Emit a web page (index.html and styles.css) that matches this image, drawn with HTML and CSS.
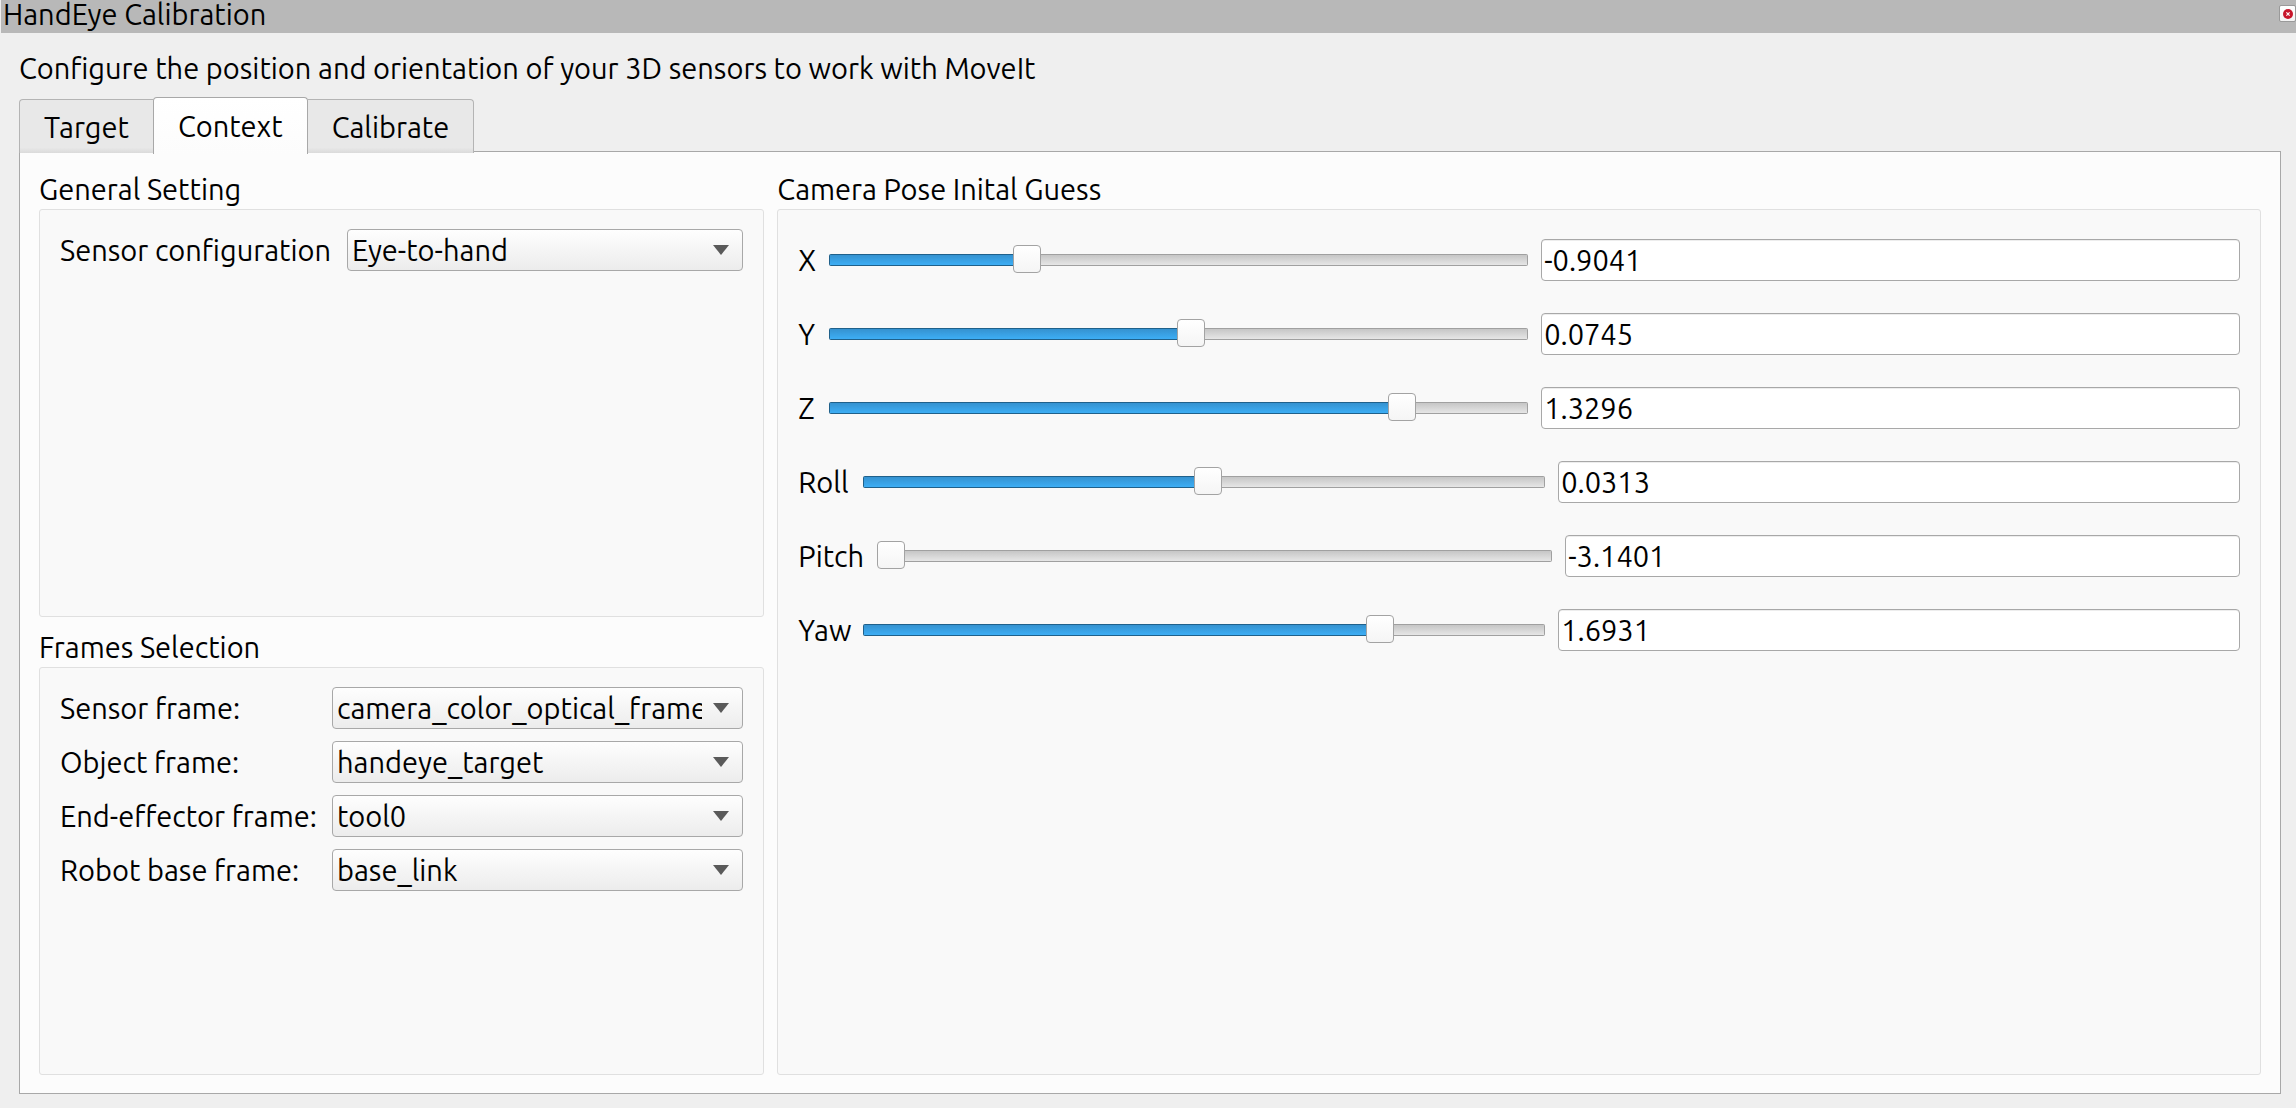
FILE: index.html
```
<!DOCTYPE html>
<html lang="en">
<head>
<meta charset="utf-8">
<title>HandEye Calibration</title>
<link rel="stylesheet" href="styles.css">
</head>
<body>
<header class="titlebar">
  <h1 class="titlebar-text">HandEye Calibration</h1>
  <button class="close" type="button" aria-label="Close">
    <svg viewBox="0 0 10 10" width="10" height="10" aria-hidden="true">
      <circle cx="5" cy="5" r="5" fill="#c7162b"/>
      <path d="M3.4 3.4l3.2 3.2M6.6 3.4L3.4 6.6" stroke="#fff" stroke-width="1.2"/>
    </svg>
  </button>
</header>
<main class="panel">
  <p class="intro">Configure the position and orientation of your 3D sensors to work with MoveIt</p>
  <div class="tabs" role="tablist">
    <button class="tab tab-first" type="button" role="tab" aria-selected="false">Target</button>
    <button class="tab tab-active" type="button" role="tab" aria-selected="true">Context</button>
    <button class="tab tab-last" type="button" role="tab" aria-selected="false">Calibrate</button>
  </div>
  <div class="pane" role="tabpanel">
    <div class="column">
      <section class="group">
        <h2 class="group-title">General Setting</h2>
        <div class="group-box">
          <div class="setting">
            <label for="sensor-config">Sensor configuration</label>
            <select class="combo" id="sensor-config"><option>Eye-to-hand</option><option>Eye-in-hand</option></select>
          </div>
        </div>
      </section>
      <section class="group">
        <h2 class="group-title">Frames Selection</h2>
        <div class="group-box">
          <div class="frames">
            <label for="sensor-frame">Sensor frame:</label>
            <select class="combo" id="sensor-frame"><option>camera_color_optical_frame</option></select>
            <label for="object-frame">Object frame:</label>
            <select class="combo" id="object-frame"><option>handeye_target</option></select>
            <label for="effector-frame">End-effector frame:</label>
            <select class="combo" id="effector-frame"><option>tool0</option></select>
            <label for="base-frame">Robot base frame:</label>
            <select class="combo" id="base-frame"><option>base_link</option></select>
          </div>
        </div>
      </section>
    </div>
    <section class="group">
      <h2 class="group-title">Camera Pose Inital Guess</h2>
      <div class="group-box pose">
        <div class="pose-row">
          <label class="name-axis" for="x">X</label>
          <input class="slider" type="range" min="-2" max="2" step="0.0001" value="-0.9041" style="--pos:0.2740" aria-label="X slider">
          <input class="field" id="x" type="text" value="-0.9041">
        </div>
        <div class="pose-row">
          <label class="name-axis" for="y">Y</label>
          <input class="slider" type="range" min="-2" max="2" step="0.0001" value="0.0745" style="--pos:0.5186" aria-label="Y slider">
          <input class="field" id="y" type="text" value="0.0745">
        </div>
        <div class="pose-row">
          <label class="name-axis" for="z">Z</label>
          <input class="slider" type="range" min="-2" max="2" step="0.0001" value="1.3296" style="--pos:0.8324" aria-label="Z slider">
          <input class="field" id="z" type="text" value="1.3296">
        </div>
        <div class="pose-row">
          <label class="name-angle" for="roll">Roll</label>
          <input class="slider" type="range" min="-3.1416" max="3.1416" step="0.0001" value="0.0313" style="--pos:0.5050" aria-label="Roll slider">
          <input class="field" id="roll" type="text" value="0.0313">
        </div>
        <div class="pose-row">
          <label class="name-pitch" for="pitch">Pitch</label>
          <input class="slider" type="range" min="-3.1416" max="3.1416" step="0.0001" value="-3.1401" style="--pos:0.0002" aria-label="Pitch slider">
          <input class="field" id="pitch" type="text" value="-3.1401">
        </div>
        <div class="pose-row">
          <label class="name-angle" for="yaw">Yaw</label>
          <input class="slider" type="range" min="-3.1416" max="3.1416" step="0.0001" value="1.6931" style="--pos:0.7695" aria-label="Yaw slider">
          <input class="field" id="yaw" type="text" value="1.6931">
        </div>
      </div>
    </section>
  </div>
</main>
</body>
</html>
```
FILE: styles.css
```
* {
  box-sizing: border-box;
}

body {
  margin: 0;
  min-height: 100vh;
  display: flex;
  flex-direction: column;
  background: #efefef;
  color: #000;
  font: 29px/34px Ubuntu, "Noto Sans", sans-serif;
}

button,
input,
select {
  margin: 0;
  font: inherit;
  color: inherit;
}

h1,
h2,
p {
  margin: 0;
  font: inherit;
}

/* Title bar */
.titlebar {
  display: flex;
  justify-content: space-between;
  height: 33px;
  margin-left: 1px;
  padding-left: 2px;
  background: #b8b8b8;
}

.titlebar-text {
  line-height: 28px;
}

.close {
  display: flex;
  align-items: center;
  justify-content: center;
  width: 17px;
  height: 17px;
  margin-top: 5px;
  padding: 0;
  border: 1px solid #9a9a9a;
  border-radius: 2px;
  background: linear-gradient(#fff, #f3f3f3);
}

/* Tabs */
.panel {
  flex: 1;
  display: flex;
  flex-direction: column;
  padding: 18px 15px 14px 19px;
}

.tabs {
  display: flex;
  align-items: flex-end;
  margin: 12px 0 -3px;
  position: relative;
}

.tab {
  height: 54px;
  margin-bottom: 1px;
  padding: 0 24px;
  border: 1px solid #b4b4b4;
  border-bottom: 0;
  border-radius: 4px 4px 0 0;
  background: linear-gradient(#e8e8e8 90%, #dadada);
  line-height: 52px;
}

.tab-first {
  border-right: 0;
  border-top-right-radius: 0;
}

.tab-last {
  border-left: 0;
  border-top-left-radius: 0;
}

.tab-active {
  height: 57px;
  margin-bottom: 0;
  border-color: #a8a8a8;
  background: linear-gradient(#fff, #fcfcfc);
}

.pane {
  flex: 1;
  display: grid;
  grid-template-columns: minmax(0, 22fr) minmax(0, 45fr);
  gap: 13px;
  padding: 20px 19px 18px;
  border: 1px solid #a8a8a8;
  background: #fcfcfc;
}

/* Groups */
.column {
  display: flex;
  flex-direction: column;
  gap: 13px;
}

.group {
  flex: 1;
  display: flex;
  flex-direction: column;
  gap: 3px;
}

.group-box {
  flex: 1;
  padding: 19px 20px;
  border: 1px solid #e0e0e0;
  border-radius: 3px;
  background: #f9f9f9;
}

.setting,
.frames {
  display: grid;
  align-items: center;
  gap: 12px;
}

.setting {
  grid-template-columns: 275px minmax(0, 1fr);
}

.frames {
  grid-template-columns: 260px minmax(0, 1fr);
}

.combo {
  appearance: none;
  min-width: 0;
  height: 42px;
  padding: 0 40px 0 4px;
  border: 1px solid #a8a8a8;
  border-radius: 4px;
  background:
    url("data:image/svg+xml,%3Csvg xmlns='http://www.w3.org/2000/svg' width='16' height='10'%3E%3Cpath d='M0 0h16L8 10z' fill='%235a5a5a'/%3E%3C/svg%3E") no-repeat right 13px center,
    linear-gradient(#fefefe, #ececec);
}

/* Pose sliders */
.pose {
  display: flex;
  flex-direction: column;
  gap: 32px;
  padding: 29px 20px;
}

.pose-row {
  display: flex;
  align-items: center;
  gap: 13px;
}

.name-axis {
  width: 18px;
}

.name-angle {
  width: 52px;
}

.name-pitch {
  width: 66px;
}

.field {
  flex: 1 1 10px;
  min-width: 0;
  height: 42px;
  padding: 0 2px;
  border: 1px solid #a8a8a8;
  border-radius: 4px;
  background: #fff;
  box-shadow: inset 0 1px #ededed;
}

.slider {
  appearance: none;
  flex: 1 1 10px;
  min-width: 0;
  height: 28px;
  background: none;
}

.slider::-webkit-slider-runnable-track {
  --fill: max(0px, 100% * var(--pos) - 1px);
  height: 12px;
  border-radius: 2px;
  background:
    linear-gradient(#20618b, #20618b) left / min(1px, var(--fill)) 100% no-repeat,
    linear-gradient(#20618b 1px, #3592d0 1px, #3daef5 11px, #20618b 11px) left / var(--fill) 100% no-repeat,
    linear-gradient(#a0a0a0, #a0a0a0) right / 1px 100% no-repeat,
    linear-gradient(#a0a0a0 1px, #c6c6c6 1px, #e6e6e6 11px, #a0a0a0 11px);
}

.slider::-webkit-slider-thumb {
  appearance: none;
  width: 28px;
  height: 28px;
  margin-top: -9px;
  border: 1px solid #a3a3a3;
  border-radius: 4px;
  background: linear-gradient(#fff, #f5f5f5);
}
```
